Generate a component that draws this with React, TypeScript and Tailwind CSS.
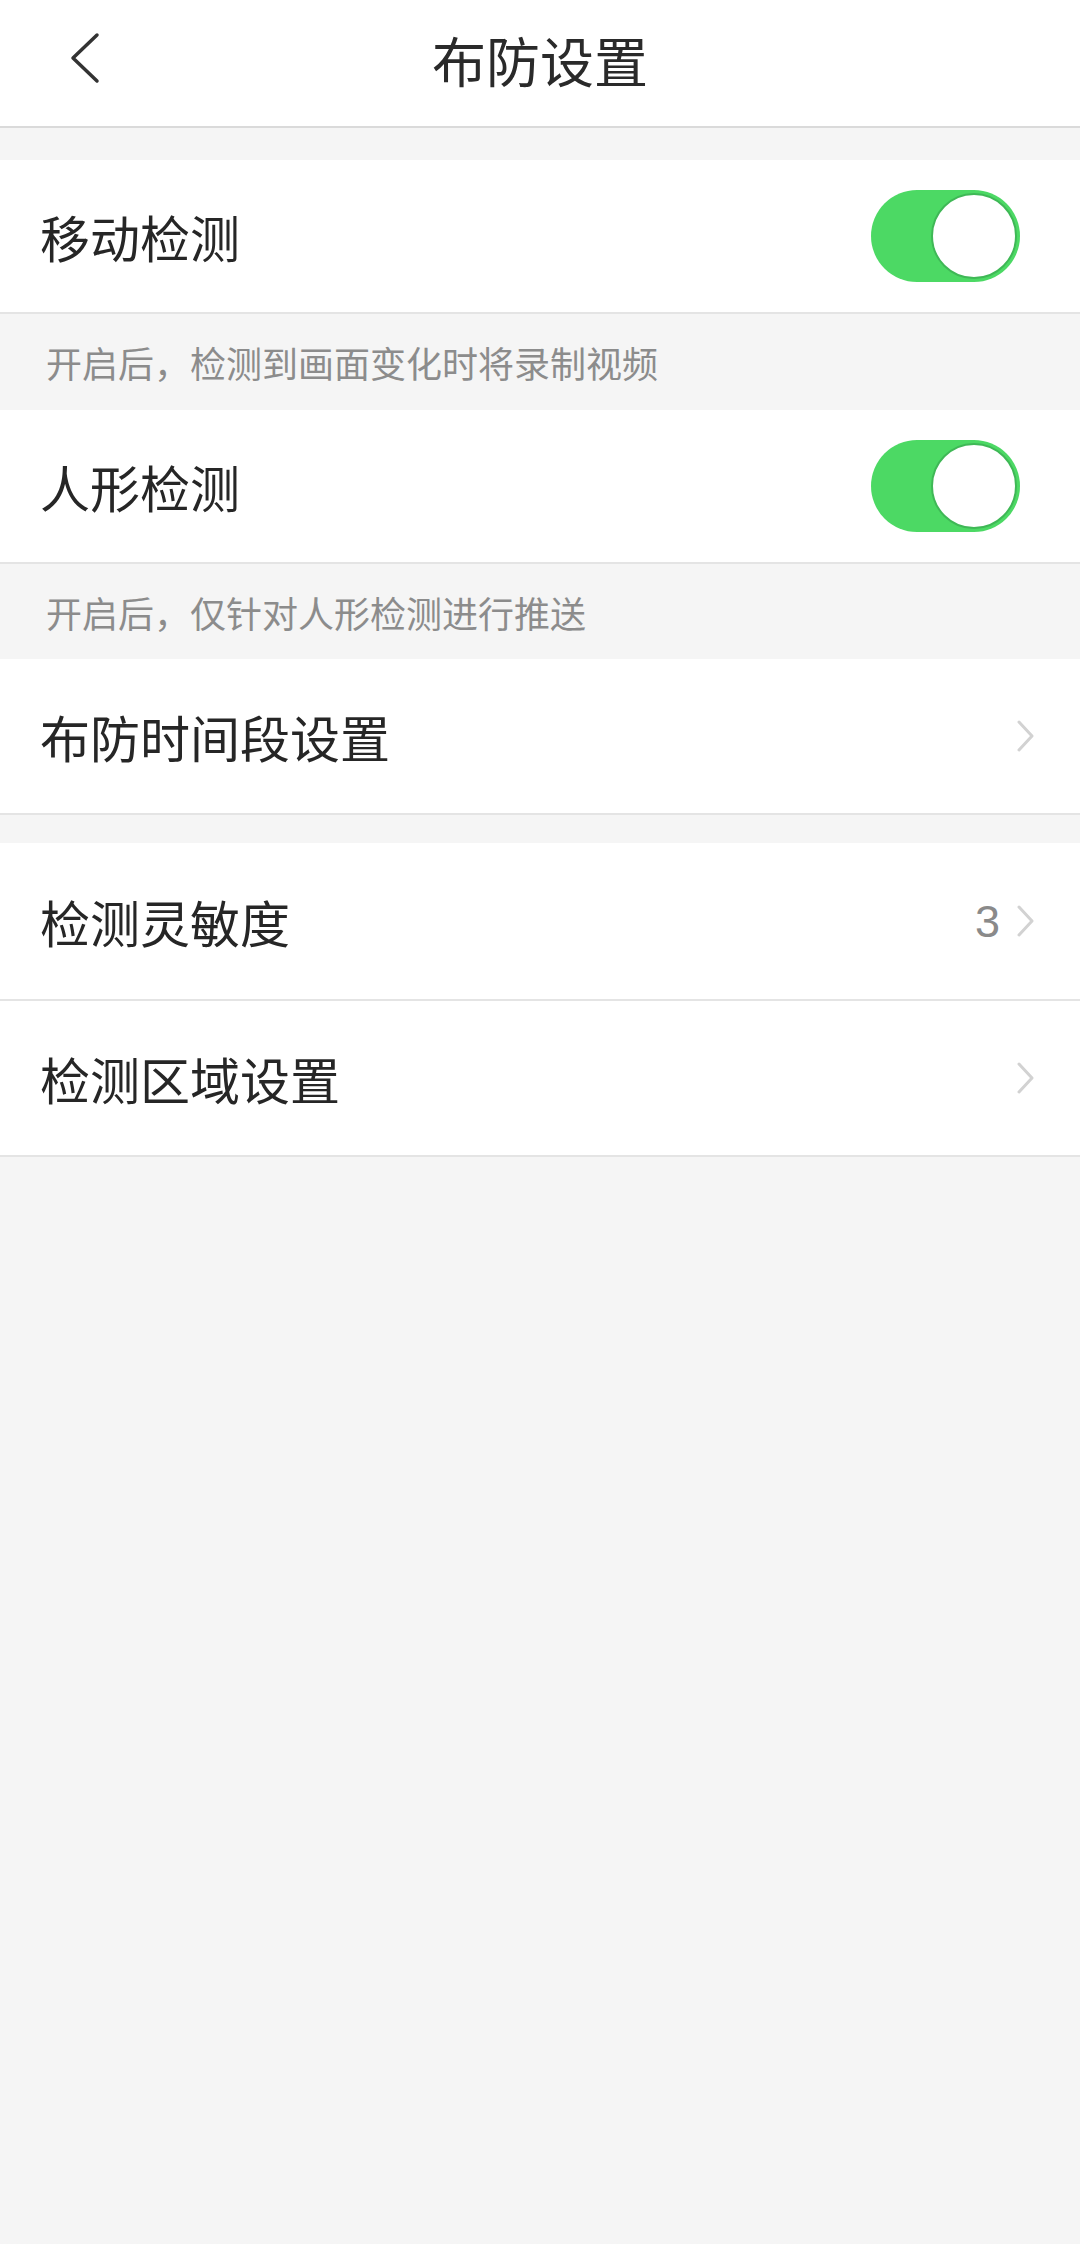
import React, { useState } from 'react';

const FONT = { fontFamily: '"Noto Sans CJK SC", "Noto Sans", sans-serif' };

const Toggle: React.FC<{ on: boolean; onChange: () => void }> = ({ on, onChange }) => (
  <button
    type="button"
    onClick={onChange}
    className={`relative w-[149px] h-[92px] rounded-full flex items-center transition-colors ${
      on ? 'bg-[#4cd964] justify-end' : 'bg-[#e5e5e5] justify-start'
    }`}
  >
    <span className="w-[86px] h-[86px] mr-[3px] rounded-full bg-white border-2 border-[#3fb856]" />
  </button>
);

const Chevron = () => (
  <svg width="20" height="32" viewBox="0 0 20 32" fill="none">
    <path d="M3 2 L16 16 L3 30" stroke="#d2d2d2" strokeWidth="3" strokeLinecap="round" strokeLinejoin="round" />
  </svg>
);

const NavRow: React.FC<{ label: string; value?: string; className?: string }> = ({ label, value, className }) => (
  <div className={`bg-white border-b-2 border-[#e4e4e4] flex items-center justify-between pl-[40px] pr-[44px] ${className}`}>
    <span className="text-[50px] text-[#262626] leading-none">{label}</span>
    <div className="flex items-center gap-[16px]">
      {value && (
        <span className="text-[45px] text-[#8a8a8a] leading-none" style={{ fontFamily: '"Liberation Sans", Arial, sans-serif' }}>
          {value}
        </span>
      )}
      <Chevron />
    </div>
  </div>
);

export default function App() {
  const [motion, setMotion] = useState(true);
  const [human, setHuman] = useState(true);

  return (
    <div className="min-h-[2244px] w-[1080px] bg-[#f5f5f5]" style={FONT}>
      {/* Header */}
      <div className="h-[128px] bg-white border-b-2 border-[#dadada] flex items-center relative">
        <button className="absolute left-[68px] top-[32px]">
          <svg width="34" height="52" viewBox="0 0 34 52" fill="none">
            <path d="M29 3 L5 26 L29 49" stroke="#333" strokeWidth="3.5" strokeLinecap="round" strokeLinejoin="round" />
          </svg>
        </button>
        <h1 className="flex-1 text-center text-[54px] text-[#2a2a2a] leading-none pb-[6px]">布防设置</h1>
      </div>

      <div className="h-[32px]" />

      {/* 移动检测 */}
      <div className="h-[154px] bg-white border-b-2 border-[#e4e4e4] flex items-center justify-between pl-[40px] pr-[60px]">
        <span className="text-[50px] text-[#262626] leading-none">移动检测</span>
        <Toggle on={motion} onChange={() => setMotion(v => !v)} />
      </div>
      <div className="h-[96px] flex items-center pl-[46px]">
        <span className="text-[36px] text-[#8c8c8c] leading-none">开启后，检测到画面变化时将录制视频</span>
      </div>

      {/* 人形检测 */}
      <div className="h-[154px] bg-white border-b-2 border-[#e4e4e4] flex items-center justify-between pl-[40px] pr-[60px]">
        <span className="text-[50px] text-[#262626] leading-none">人形检测</span>
        <Toggle on={human} onChange={() => setHuman(v => !v)} />
      </div>
      <div className="h-[95px] flex items-center pl-[46px]">
        <span className="text-[36px] text-[#8c8c8c] leading-none">开启后，仅针对人形检测进行推送</span>
      </div>

      <NavRow label="布防时间段设置" className="h-[156px]" />

      <div className="h-[28px]" />

      <NavRow label="检测灵敏度" value="3" className="h-[158px]" />
      <NavRow label="检测区域设置" className="h-[156px]" />
    </div>
  );
}
